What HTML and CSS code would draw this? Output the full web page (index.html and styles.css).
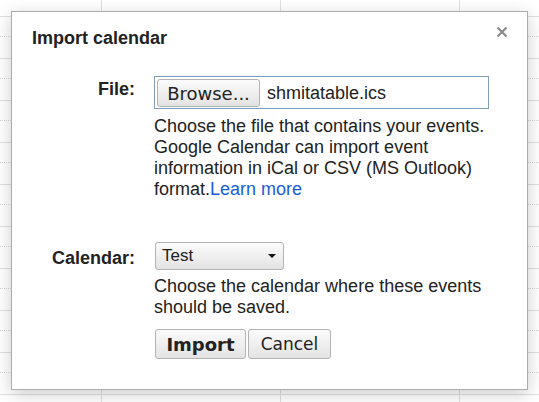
FILE: index.html
```html
<!DOCTYPE html>
<html>
<head>
<meta charset="utf-8">
<link rel="stylesheet" href="styles.css">
</head>
<body>
<div class="bg">
  <div class="rows">
    <div class="hour"><div class="half"></div></div>
    <div class="hour"><div class="half"></div></div>
    <div class="hour"><div class="half"></div></div>
    <div class="hour"><div class="half"></div></div>
    <div class="hour"><div class="half"></div></div>
    <div class="hour"><div class="half"></div></div>
    <div class="hour"><div class="half"></div></div>
    <div class="hour"><div class="half"></div></div>
    <div class="hour"><div class="half"></div></div>
    <div class="hour"><div class="half"></div></div>
    <div class="hour"><div class="half"></div></div>
  </div>
  <div class="cols">
    <div class="col"></div>
    <div class="col"></div>
    <div class="col"></div>
  </div>
</div>

<div class="dialog">
  <div class="title">Import calendar</div>
  <svg class="close" width="12" height="12" viewBox="0 0 12 12" aria-hidden="true">
    <path d="M1.5 1.5 L10.5 10.5 M10.5 1.5 L1.5 10.5" stroke="#8a8a8a" stroke-width="2.2" fill="none"/>
  </svg>

  <div class="row row-file">
    <div class="label label-file">File:</div>
    <div class="content">
      <div class="file">
        <span class="btn btn-browse">Browse...</span>
        <span class="filename">shmitatable.ics</span>
      </div>
      <div class="desc desc-file">Choose the file that contains your events. Google Calendar can import event information in iCal or CSV (MS Outlook) format.<a class="link" href="#">Learn more</a></div>
    </div>
  </div>

  <div class="row row-cal">
    <div class="label label-cal">Calendar:</div>
    <div class="content">
      <div class="select">
        <span class="select-text">Test</span>
        <span class="caret"></span>
      </div>
      <div class="desc desc-cal">Choose the calendar where these events should be saved.</div>
      <div class="actions">
        <span class="btn btn-import">Import</span>
        <span class="btn btn-cancel">Cancel</span>
      </div>
    </div>
  </div>
</div>
</body>
</html>
```

FILE: styles.css
```css
html, body {
  margin: 0;
  padding: 0;
}

body {
  width: 539px;
  height: 402px;
  overflow: hidden;
  position: relative;
  background: #ffffff;
  font-family: "Liberation Sans", Arial, sans-serif;
  font-size: 18px;
  color: #222222;
}

/* background calendar grid */
.bg {
  position: absolute;
  inset: 0;
  overflow: hidden;
}

.rows {
  margin-top: -26px;
}

.hour {
  height: 42px;
  box-sizing: border-box;
  border-top: 1px solid #e0e0e0;
  padding-top: 19px;
}

.half {
  border-top: 1px dotted #d6d6d6;
}

.cols {
  position: absolute;
  inset: 0;
  display: flex;
  padding-left: 101px;
}

.col {
  flex: 0 0 179px;
  border-left: 1px solid #e0e0e0;
  box-sizing: border-box;
}

/* dialog */
.dialog {
  position: absolute;
  left: 11px;
  top: 11px;
  width: 517px;
  height: 379px;
  box-sizing: border-box;
  background: #ffffff;
  border: 1px solid #acacac;
  box-shadow: 0 4px 16px rgba(0, 0, 0, 0.2);
  padding: 16px 20px 0 20px;
}

.title {
  font-weight: bold;
  font-size: 18px;
  color: #222222;
}

.close {
  position: absolute;
  top: 14px;
  right: 19px;
}

.row {
  display: grid;
  grid-template-columns: 103px 335px;
  column-gap: 19px;
}

.row-file {
  margin-top: 27px;
}

.row-cal {
  margin-top: 42px;
}

.label {
  font-weight: bold;
  text-align: right;
}

.label-file {
  padding-top: 3px;
}

.label-cal {
  padding-top: 6px;
}

.file {
  display: flex;
  align-items: center;
  height: 33px;
  box-sizing: border-box;
  border: 1px solid #7f9db9;
  padding: 2px 2px 1px 2px;
}

.btn {
  display: inline-flex;
  align-items: center;
  justify-content: center;
  box-sizing: border-box;
  border: 1px solid #b3b3b3;
  border-radius: 3px;
  background: linear-gradient(#fbfbfb, #e3e3e3);
  font-family: "DejaVu Sans", sans-serif;
  color: #222222;
}

.btn-browse {
  width: 103px;
  height: 28px;
  font-size: 18px;
}

.filename {
  margin-left: 7px;
}

.desc {
  line-height: normal;
}

.desc-file {
  margin-top: 7px;
}

.link {
  color: #1a5ddb;
  text-decoration: none;
}

.select {
  margin-left: 1px;
  width: 129px;
  height: 28px;
  box-sizing: border-box;
  border: 1px solid #b3b3b3;
  border-radius: 3px;
  background: linear-gradient(#fbfbfb, #e3e3e3);
  display: flex;
  align-items: center;
  justify-content: space-between;
  padding: 0 7px 0 6px;
}

.select-text {
  font-size: 17px;
}

.caret {
  width: 0;
  height: 0;
  border-left: 4px solid transparent;
  border-right: 4px solid transparent;
  border-top: 4px solid #111111;
}

.desc-cal {
  margin-top: 6px;
}

.actions {
  margin-top: 11px;
  margin-left: 1px;
  display: flex;
  gap: 2px;
}

.btn-import {
  width: 91px;
  height: 30px;
  font-weight: bold;
  font-size: 18px;
}

.btn-cancel {
  width: 83px;
  height: 30px;
  font-size: 17px;
}
```
